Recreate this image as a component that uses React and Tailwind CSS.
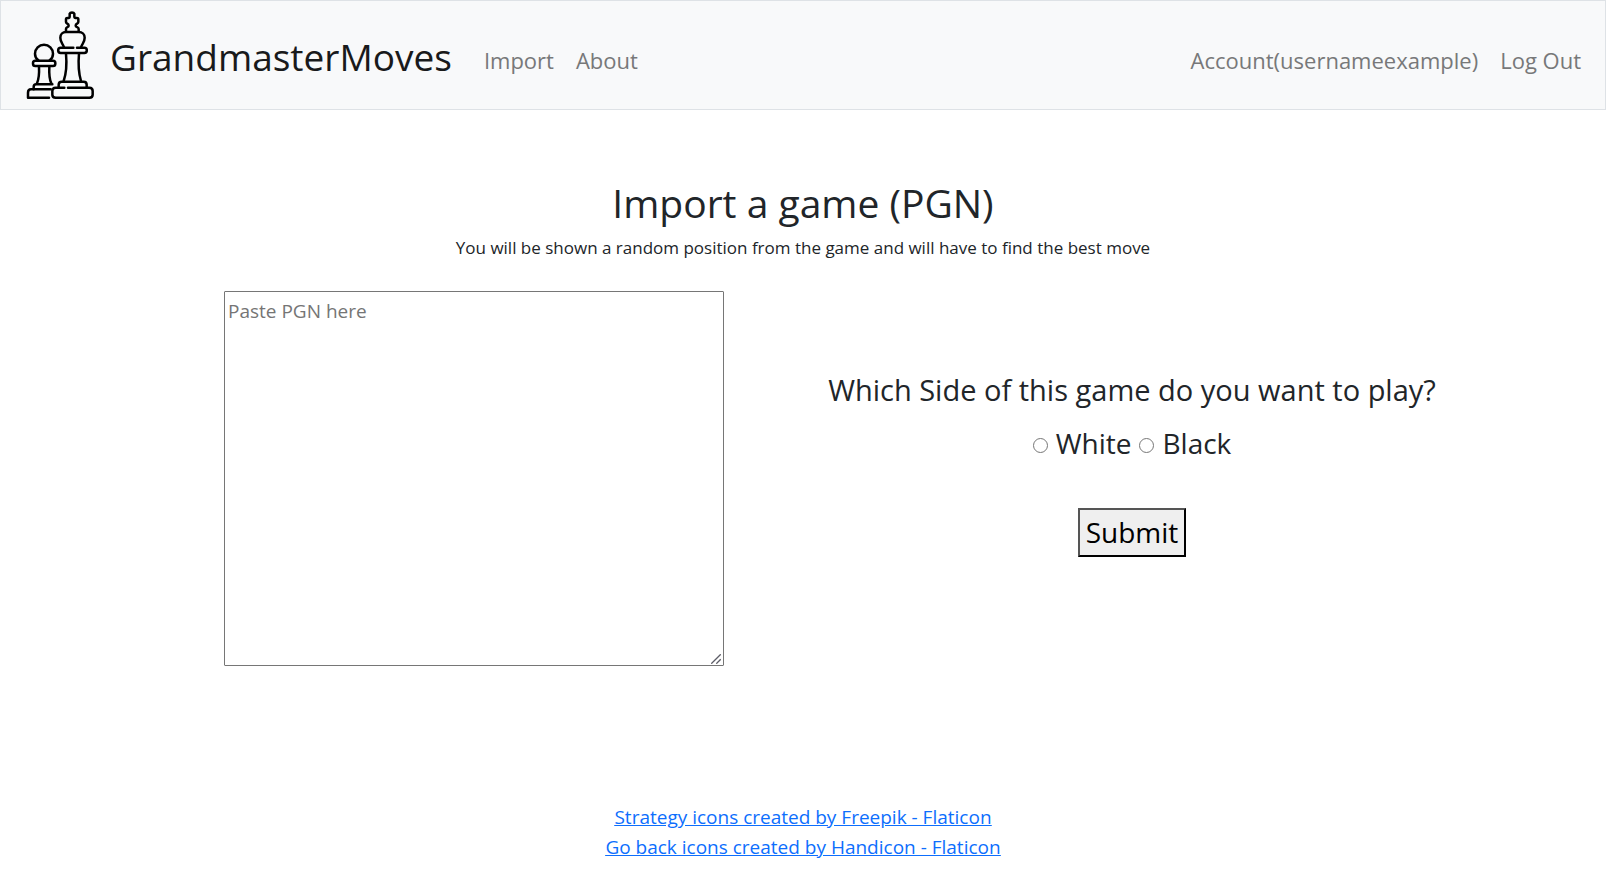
function ChessLogo() {
  return (
    <svg
      viewBox="72 27 216 276"
      className="h-[92px] w-[72px] shrink-0"
      fill="none"
      stroke="#000"
      strokeWidth="7.5"
      strokeLinecap="round"
      strokeLinejoin="round"
      aria-hidden="true"
    >
      {/* pawn */}
      <path d="M115 181 C108 176 105 169 105 161 A27 27 0 0 1 159 161 C159 169 156 176 149 181" />
      <rect x="99" y="182" width="67" height="16" rx="7" />
      <path d="M117 200 C118 220 117 236 111 250" />
      <path d="M148 200 C147 220 148 238 154 250" />
      <path d="M157 253 H109 C103 253 101 256 101 261 V268" />
      <path d="M152 268 H93 C87 268 84 272 84 278 V293 H147" />
      {/* king */}
      <path d="M198 94 V87 C198 80 206 83 206 77 C206 70 198 72 198 66 V57 C198 51 209 58 209 50 V41 C211 36 221 36 223 41 V50 C223 58 235 51 235 57 V66 C235 72 227 70 227 77 C227 83 236 80 236 87 V94" />
      <path d="M192 142 C189 131 181 128 181 113 C181 103 188 96 198 96 H236 C247 96 254 103 254 113 C254 128 246 131 243 142" />
      <path d="M220 143 H182 C172 143 172 159 182 159 H253 C263 159 263 143 253 143 H231" />
      <path d="M198 161 C201 195 199 220 191 243" />
      <path d="M237 161 C234 195 236 220 243 243" />
      <path d="M176 262 V254 C176 248 179 245 185 245 H251 C257 245 260 248 260 254 V262" />
      <path d="M193 263 H167 C160 263 157 267 157 273 V284 C157 290 160 293 167 293 H268 C275 293 278 290 278 284 V273 C278 267 275 263 268 263 H204" />
    </svg>
  );
}

const navLink = "text-[22px] leading-9 text-[#777879]";

export default function App() {
  return (
    <div className="min-h-screen bg-white font-['Open_Sans','Noto_Sans',sans-serif] text-[#212529]">
      <header className="border border-[#dee2e6] bg-[#f8f9fa]">
        <nav className="flex h-[108px] items-center pr-6 pl-[23px]">
          <a href="#home" className="flex items-center gap-[14px] text-[37px] leading-[60px] text-[#191a1b]">
            <ChessLogo />
            <span className="pt-1">GrandmasterMoves</span>
          </a>
          <div className="ml-8 flex flex-1 items-center gap-[22px] pt-[10px]">
            <a href="#import" className={navLink}>Import</a>
            <a href="#about" className={navLink}>About</a>
          </div>
          <div className="flex items-center gap-[22px] pt-[10px]">
            <a href="#account" className={navLink}>Account(usernameexample)</a>
            <a href="#logout" className={navLink}>Log Out</a>
          </div>
        </nav>
      </header>

      <main className="pt-[69px]">
        <div className="text-center">
          <h1 className="text-[39px] leading-[48px]">Import a game (PGN)</h1>
          <p className="pt-[6px] text-[17px] leading-[30px]">
            You will be shown a random position from the game and will have to find the best move
          </p>
        </div>

        <form
          className="mx-auto mt-7 grid max-w-[1316px] grid-cols-2"
          onSubmit={(e) => e.preventDefault()}
        >
          <div className="flex items-start justify-center">
            <div className="relative flex">
              <textarea
                aria-label="PGN"
                placeholder="Paste PGN here"
                className="h-[375px] w-[500px] resize rounded-[1px] border border-[#767676] bg-white px-[3px] py-1 text-[19px] leading-[30px] placeholder:text-[#757575] [&::-webkit-resizer]:bg-transparent"
              />
              <svg
                viewBox="0 0 10 10"
                className="pointer-events-none absolute right-[3px] bottom-[2px] size-[10px]"
                fill="none"
                stroke="#5c5c66"
                strokeWidth="1.3"
                aria-hidden="true"
              >
                <path d="M0.3 9.7 L9.7 0.3 M5.3 9.7 L9.7 5.3" />
              </svg>
            </div>
          </div>
          <div className="flex flex-col items-center pt-[76px] text-[28px] leading-[45px]">
            <fieldset className="flex flex-col items-center">
              <legend className="text-center text-[29px]">Which Side of this game do you want to play?</legend>
              <div className="mt-[9px] flex items-center gap-2">
                <input id="white" type="radio" name="side" className="mt-[3px] size-[15px]" />
                <label htmlFor="white">White</label>
                <input id="black" type="radio" name="side" className="mt-[3px] size-[15px]" />
                <label htmlFor="black">Black</label>
              </div>
            </fieldset>
            <button
              type="submit"
              className="mt-[42px] border-2 border-t-[#555] border-r-black border-b-black border-l-[#555] bg-[#efefef] px-[6px] text-black"
            >
              Submit
            </button>
          </div>
        </form>
      </main>

      <footer className="flex flex-col items-center pt-[136px] text-[19px] leading-[30px] text-[#0d6efd] underline">
        <a href="#freepik">Strategy icons created by Freepik - Flaticon</a>
        <a href="#handicon">Go back icons created by Handicon - Flaticon</a>
      </footer>
    </div>
  );
}
